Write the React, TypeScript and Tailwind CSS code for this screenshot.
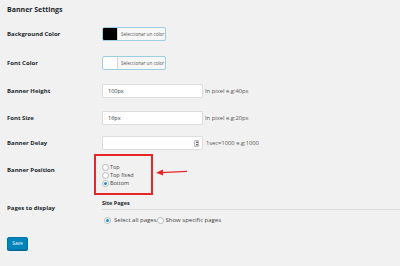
import type { ReactNode } from 'react'

function Radio({ checked = false }: { checked?: boolean }) {
  return (
    <span className="inline-flex w-[7px] h-[7px] shrink-0 items-center justify-center rounded-full border border-[#b4b9be] bg-white">
      {checked ? <span className="w-[3px] h-[3px] rounded-full bg-[#1e8cbe]" /> : null}
    </span>
  )
}

function Row({ label, h, children, top = false }: { label: string; h: string; children: ReactNode; top?: boolean }) {
  return (
    <div className={`flex ${h} ${top ? 'items-start' : 'items-center'}`}>
      <div className={`w-[95px] shrink-0 text-[6px] leading-[8px] font-bold text-[#23282d] ${top ? 'mt-[12px]' : ''}`}>
        {label}
      </div>
      {children}
    </div>
  )
}

function ColorButton({ color }: { color: string }) {
  return (
    <div className="flex h-[14px] w-[64px] items-stretch rounded-[2px] border border-[#9ccde0] bg-[#f7f7f7] overflow-hidden">
      <span className="w-[14px] shrink-0" style={{ background: color }} />
      <span className="flex items-center border-l border-[#d5d5d5] px-[3px] text-[4.6px] text-[#555] whitespace-nowrap">
        Seleccionar un color
      </span>
    </div>
  )
}

function TextInput({ value, help }: { value: string; help: string }) {
  return (
    <div className="flex items-center gap-[2px]">
      <div className="flex h-[14px] w-[101px] items-center rounded-[1px] border border-[#ddd] bg-white px-[5px] text-[5.5px] text-[#32373c]">
        {value}
      </div>
      <span className="text-[5.8px] text-[#555]">{help}</span>
    </div>
  )
}

export default function App() {
  return (
    <div className="w-[400px] h-[266px] bg-[#f1f1f1] px-[7px] font-['Open_Sans',sans-serif] overflow-hidden">
      <div className="pt-[6px] h-[20px] text-[7px] leading-[8px] font-bold text-[#23282d]">Banner Settings</div>

      <Row label="Background Color" h="h-[28px]">
        <ColorButton color="#000" />
      </Row>

      <Row label="Font Color" h="h-[30px]">
        <ColorButton color="#fff" />
      </Row>

      <Row label="Banner Height" h="h-[26px]">
        <TextInput value="100px" help="In pixel e.g:40px" />
      </Row>

      <Row label="Font Size" h="h-[28px]">
        <TextInput value="16px" help="In pixel e.g:20px" />
      </Row>

      <Row label="Banner Delay" h="h-[22px]">
        <div className="flex items-center gap-[3px]">
          <div className="flex h-[14px] w-[101px] items-center justify-end rounded-[1px] border border-[#ddd] bg-white pr-[3px]">
            <span className="flex h-[7px] w-[5px] flex-col items-center justify-center gap-[1px] rounded-[1px] border border-[#bbb] bg-[#eee]">
              <span className="h-0 w-0 border-x-[1.5px] border-b-[2px] border-x-transparent border-b-[#444]" />
              <span className="h-0 w-0 border-x-[1.5px] border-t-[2px] border-x-transparent border-t-[#444]" />
            </span>
          </div>
          <span className="text-[5.8px] text-[#555]">1sec=1000 e.g:1000</span>
        </div>
      </Row>

      <Row label="Banner Position" h="h-[42px]" top>
        <div className="relative -ml-[8px] h-[41px] w-[59px] border-2 border-[#e8262a] pl-[6px] pt-[8px]">
          <div className="flex flex-col gap-[1px] text-[5.5px] leading-[7px] text-[#444]">
            <label className="flex items-center gap-[1px]">
              <Radio /> Top
            </label>
            <label className="flex items-center gap-[1px]">
              <Radio /> Top fixed
            </label>
            <label className="flex items-center gap-[1px]">
              <Radio checked /> Bottom
            </label>
          </div>
          <svg className="absolute left-[59px] top-[12px]" width="34" height="8" viewBox="0 0 34 8">
            <path d="M6 4.6 L32 3.4" stroke="#e8262a" strokeWidth="1.4" />
            <path d="M1 4.8 L8 1.5 L8 7.5 Z" fill="#e8262a" />
          </svg>
        </div>
      </Row>

      <div className="flex h-[30px] items-start">
        <div className="w-[95px] shrink-0 pt-[8px] text-[6px] leading-[8px] font-bold text-[#23282d]">Pages to display</div>
        <div className="flex-1 -mr-[7px]">
          <div className="pt-[3px] pb-[2px] text-[5.5px] leading-[8px] font-bold text-[#23282d]">Site Pages</div>
          <div className="border-t border-[#ddd]" />
          <div className="mt-[6px] flex items-center pl-[2px] text-[6px] leading-[8px] text-[#444]">
            <Radio checked />
            <span className="ml-[3px]">Select all pages</span>
            <Radio />
            <span className="ml-[2px]">Show specific pages</span>
          </div>
        </div>
      </div>

      <div className="mt-[11px] flex">
        <button className="flex h-[13px] w-[21px] items-center justify-center rounded-[2px] border border-[#0073aa] bg-[#0085ba] text-[4.8px] leading-none text-white shadow-[0_1px_0_#006799]">
          Save
        </button>
      </div>
    </div>
  )
}
